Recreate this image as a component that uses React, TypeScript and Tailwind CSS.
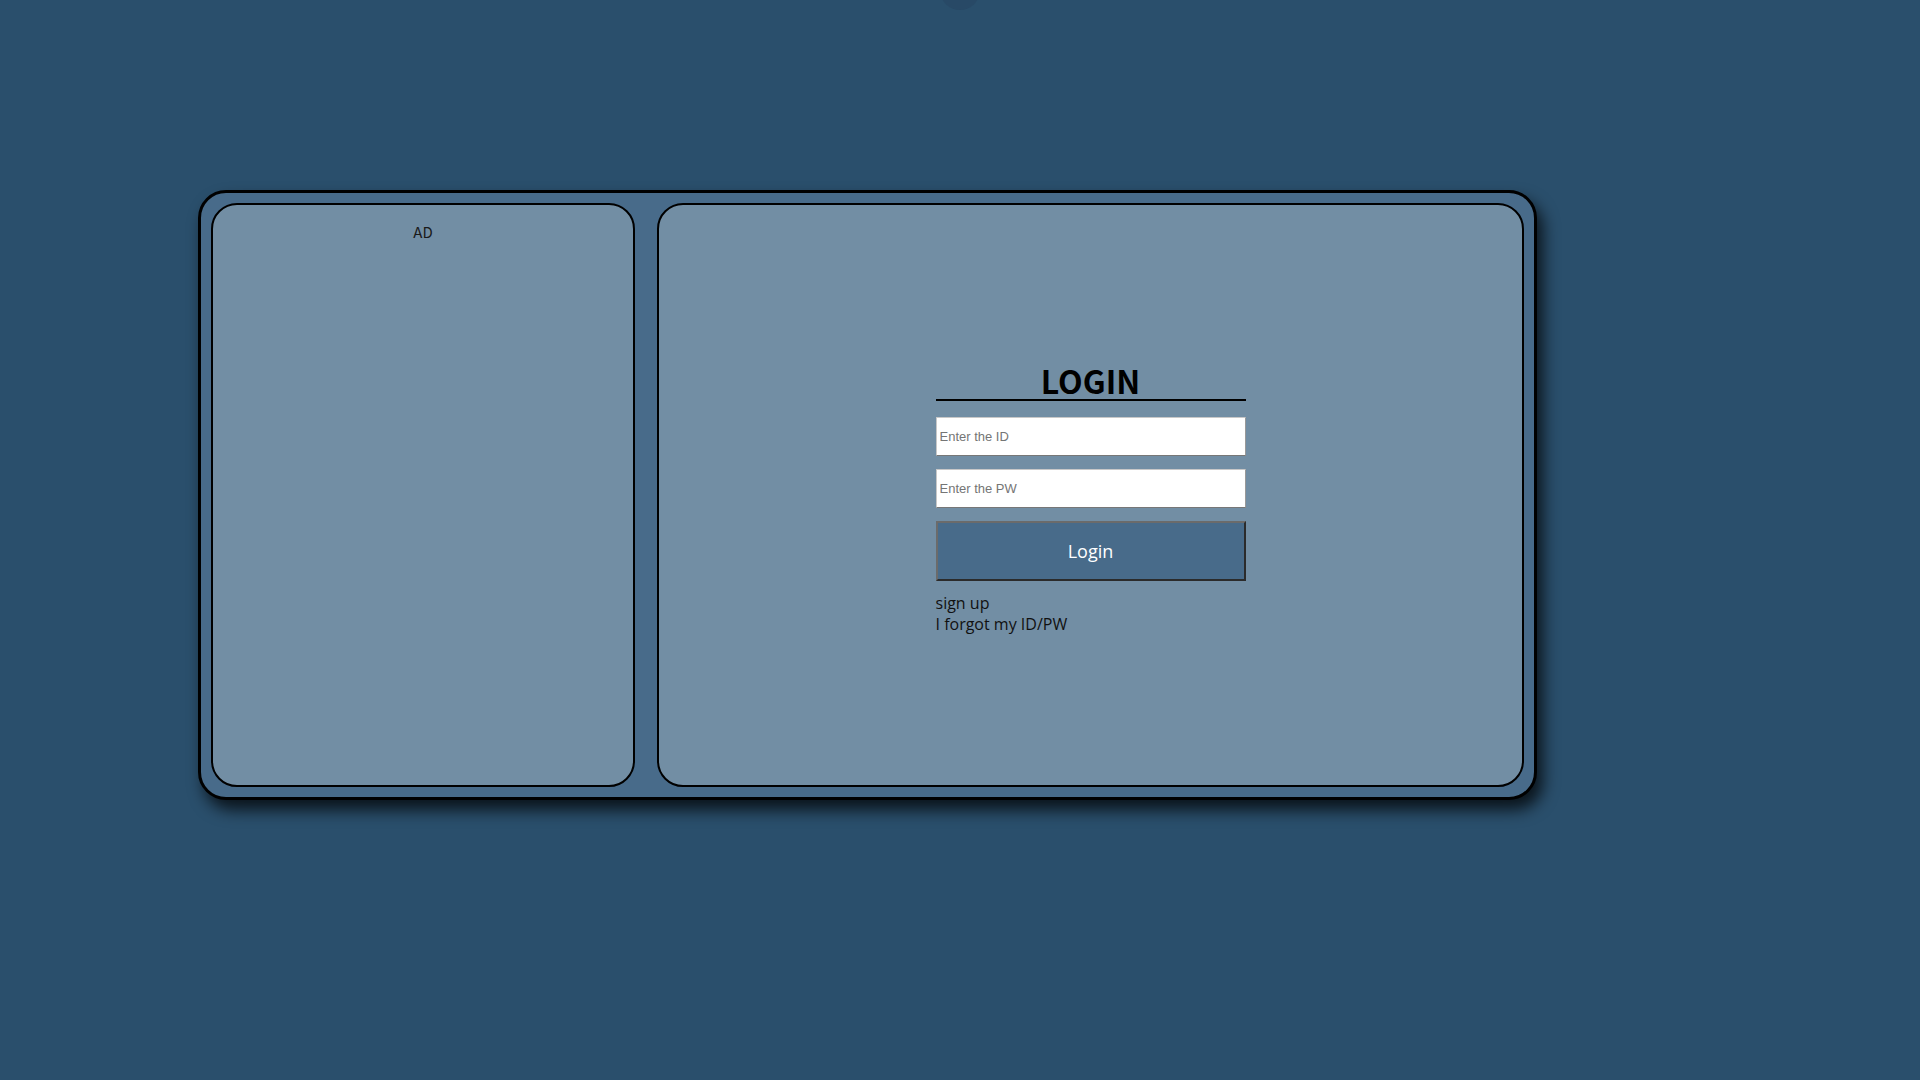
export default function App() {
  return (
    <div className="relative min-h-screen w-full overflow-hidden bg-[#2a4f6c] pt-[190px] pl-[198px] font-['Noto_Sans_CJK_KR','Noto_Sans',sans-serif]">
      {/* small circle peeking at the top */}
      <div className="absolute left-[940px] top-[-30px] h-10 w-10 rounded-full bg-[#284966]" />

      <div className="flex h-[610px] w-[1339px] gap-[22px] rounded-[28px] border-[3px] border-black bg-[#486b8a] p-[10px] shadow-[6px_10px_16px_rgba(0,0,0,0.75)]">
        <div className="flex w-[424px] flex-col items-center rounded-[26px] border-2 border-black bg-[#728ea4] pt-[16px]">
          <span className="text-[15px] text-[#1a1a1a]">AD</span>
        </div>

        <div className="flex flex-1 items-center justify-center rounded-[26px] border-2 border-black bg-[#728ea4] pt-[6px]">
          <div className="flex w-[310px] flex-col">
            <h2 className="border-b-2 border-black text-center text-[32px] font-bold leading-[38px] text-black">LOGIN</h2>
            <input
              type="text"
              placeholder="Enter the ID"
              className="mt-[16px] h-[39px] w-full border border-[#c8c8c8] border-b-[#777] border-r-[#999] bg-white px-[3px] font-['Liberation_Sans',Arial,sans-serif] text-[13px] text-black placeholder:text-[#757575] outline-none"
            />
            <input
              type="password"
              placeholder="Enter the PW"
              className="mt-[13px] h-[39px] w-full border border-[#c8c8c8] border-b-[#777] border-r-[#999] bg-white px-[3px] font-['Liberation_Sans',Arial,sans-serif] text-[13px] text-black placeholder:text-[#757575] outline-none"
            />
            <button className="mt-[13px] h-[60px] w-full border-2 border-t-[#6b6b6b] border-l-[#6b6b6b] border-b-[#2b2b2b] border-r-[#2b2b2b] bg-[#486b8a] font-['Open_Sans',sans-serif] text-[18px] text-white">
              Login
            </button>
            <div className="mt-[12px] flex flex-col font-['Open_Sans',sans-serif] text-[16px] leading-[21px] text-[#111]">
              <a className="cursor-pointer">sign up</a>
              <a className="cursor-pointer">I forgot my ID/PW</a>
            </div>
          </div>
        </div>
      </div>
    </div>
  );
}
